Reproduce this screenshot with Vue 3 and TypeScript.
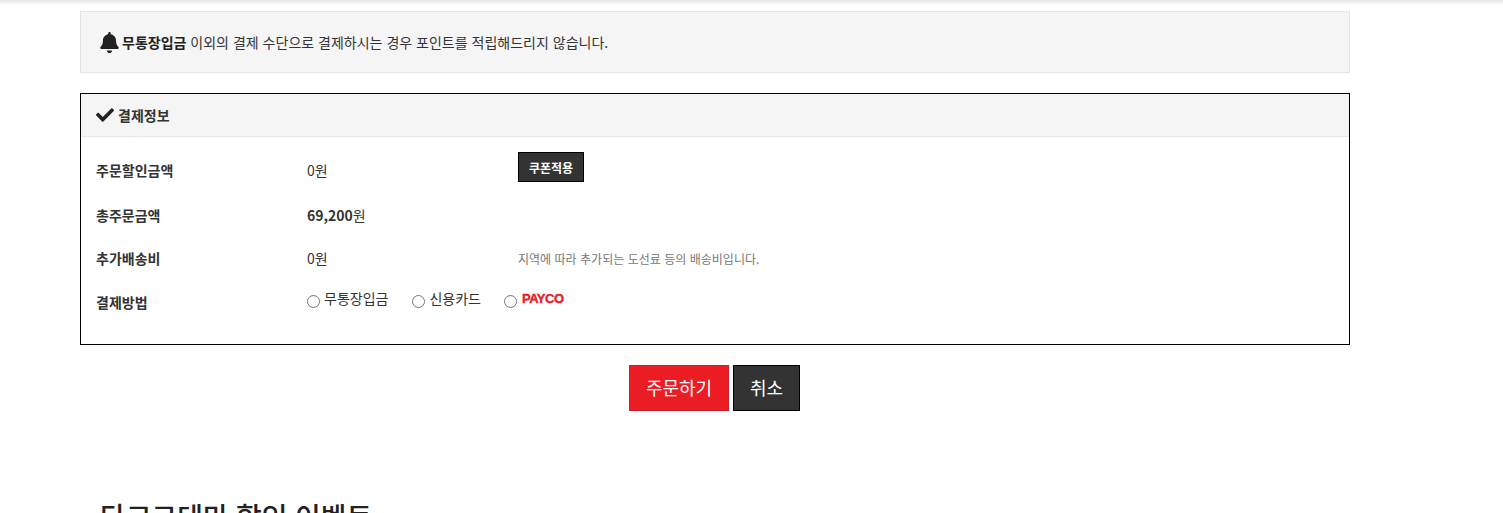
<script setup lang="ts">
interface Method { label: string; kind: 'text' | 'logo' }
const methods: Method[] = [
  { label: '무통장입금', kind: 'text' },
  { label: '신용카드', kind: 'text' },
  { label: 'PAYCO', kind: 'logo' },
]
</script>

<template>
  <div class="page">
    <div class="top-shade"></div>
    <main class="wrap">
      <div class="notice">
        <svg class="bell" viewBox="0 0 448 512" aria-hidden="true">
          <path fill="#222" d="M224 512c35.300 0 64-28.700 64-64H160c0 35.300 28.700 64 64 64zm215.400-149.700c-19.300-20.800-55.500-52-55.500-154.300 0-77.700-54.500-139.900-127.900-155.200V32c0-17.700-14.300-32-32-32s-32 14.300-32 32v20.800C118.600 68.100 64.100 130.300 64.100 208c0 102.300-36.200 133.500-55.500 154.300-6 6.400-8.700 14.100-8.600 21.700.1 16.400 13 32 32.100 32h383.800c19.100 0 32-15.600 32.100-32 .1-7.600-2.600-15.300-8.600-21.700z"/>
        </svg>
        <strong>무통장입금</strong> 이외의 결제 수단으로 결제하시는 경우 포인트를 적립해드리지 않습니다.
      </div>

      <section class="panel">
        <h3 class="panel-head">
          <svg class="check" viewBox="0 0 512 512" aria-hidden="true">
            <path fill="#222" d="M173.900 439.400L7.500 273c-10-10-10-26.200 0-36.200l36.200-36.200c10-10 26.200-10 36.200 0L192 312.700 432.100 72.600c10-10 26.200-10 36.200 0l36.200 36.200c10 10 10 26.200 0 36.200L210.100 439.400c-10 10-26.200 10-36.200 0z"/>
          </svg>
          결제정보
        </h3>
        <div class="grid">
          <div class="label">주문할인금액</div>
          <div class="value">0원</div>
          <div class="extra first"><button class="coupon" type="button">쿠폰적용</button></div>

          <div class="label">총주문금액</div>
          <div class="value"><b>69,200</b>원</div>
          <div class="extra"></div>

          <div class="label">추가배송비</div>
          <div class="value">0원</div>
          <div class="extra note">지역에 따라 추가되는 도선료 등의 배송비입니다.</div>

          <div class="label">결제방법</div>
          <div class="methods">
            <label v-for="m in methods" :key="m.label" class="method">
              <span class="radio"></span>
              <span v-if="m.kind === 'text'" class="method-text">{{ m.label }}</span>
              <span v-else class="payco">{{ m.label }}</span>
            </label>
          </div>
        </div>
      </section>

      <div class="actions">
        <button class="btn red" type="button"><span>주문하기</span></button>
        <button class="btn dark" type="button"><span>취소</span></button>
      </div>

      <h2 class="event-title">타코그테마 할인 이벤트</h2>
    </main>
  </div>
</template>

<style>
html, body { margin: 0; height: 513px; overflow: hidden; background: #fff; }
</style>

<style scoped>
.page {
  height: 513px;
  overflow: hidden;
  font-family: "Noto Sans CJK KR", "Noto Sans", sans-serif;
  font-size: 14px;
  color: #333;
}
.top-shade {
  height: 5px;
  background: linear-gradient(#e4e4e4, #fff);
}
.wrap {
  width: 1270px;
  margin-left: 80px;
  padding-top: 6px;
}
.notice {
  box-sizing: border-box;
  height: 62px;
  display: flex;
  align-items: center;
  padding-left: 19px;
  border: 1px solid #e5e5e5;
  background: #f5f5f5;
  white-space: pre-wrap;
  word-spacing: 0.8px;
  color: #333;
}
.notice strong { font-weight: 700; color: #222; }
.bell { width: 19px; height: 21px; margin-right: 3px; }
.panel {
  box-sizing: border-box;
  height: 252px;
  margin-top: 20px;
  border: 1px solid #000;
}
.panel-head {
  box-sizing: border-box;
  height: 43px;
  margin: 0;
  display: flex;
  align-items: center;
  gap: 4px;
  padding-left: 15px;
  font-size: 14px;
  font-weight: 700;
  color: #333;
  background: #f5f5f5;
  border-bottom: 1px solid #e5e5e5;
}
.check { width: 18px; height: 18px; }
.grid {
  display: grid;
  grid-template-columns: 211px 211px 1fr;
  grid-template-rows: 46px 44px 42px 46px;
  padding: 10px 0 0 15px;
  align-items: center;
}
.label { font-weight: 700; color: #333; }
.value b { font-weight: 700; }
.extra.first { align-self: start; padding-top: 5px; }
.coupon {
  box-sizing: border-box;
  width: 66px;
  height: 30px;
  padding: 0;
  border: 1px solid #000;
  background: #333;
  color: #fff;
  font: 700 12px "Noto Sans CJK KR", sans-serif;
}
.note { font-size: 12px; color: #777; word-spacing: 0.75px; }
.methods {
  grid-column: 2 / 4;
  align-self: start;
  display: flex;
  align-items: flex-start;
  gap: 24px;
  padding-top: 10px;
}
.method { display: flex; align-items: flex-start; gap: 4px; }
.method:last-child { margin-left: -1px; gap: 5px; }
.radio {
  box-sizing: border-box;
  width: 13px;
  height: 13px;
  margin-top: 6px;
  border: 1px solid #767676;
  border-radius: 50%;
  background: #fff;
}
.method-text { line-height: 18px; color: #333; }
.payco {
  margin-top: 2px;
  font: 700 13px/16px "Liberation Sans", Arial, sans-serif;
  letter-spacing: -0.5px;
  color: #e8202a;
  -webkit-text-stroke: 0.4px #e8202a;
}
.actions {
  display: flex;
  justify-content: center;
  gap: 4px;
  margin-top: 20px;
  padding-right: 1px;
}
.btn {
  box-sizing: border-box;
  height: 46px;
  padding: 0 0 2px;
  color: #fff;
  font: 400 18px "Noto Sans CJK KR", sans-serif;
}
.red { width: 100px; background: #ec1c24; border: 1px solid #c8202a; }
.dark { width: 67px; background: #333; border: 1px solid #000; }
.event-title {
  margin: 85px 0 0 20px;
  font-size: 28px;
  line-height: 40px;
  font-weight: 500;
  word-spacing: 1px;
  color: #222;
}
</style>
